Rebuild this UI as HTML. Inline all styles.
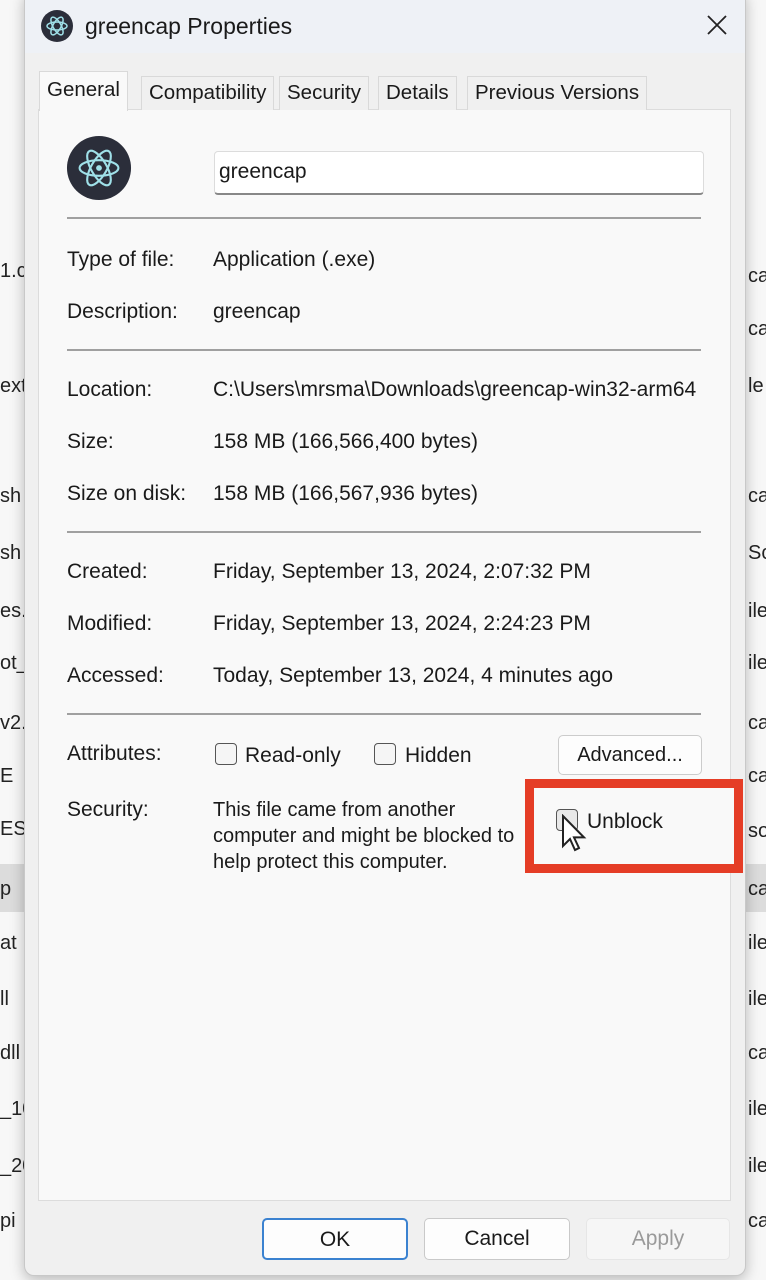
<!DOCTYPE html>
<html><head><style>
*{box-sizing:border-box;margin:0;padding:0}
body{width:766px;height:1280px;background:#f7f7f7;position:relative;overflow:hidden;font-family:"Liberation Sans",sans-serif;color:#1a1a1a;font-size:21px}
.a{position:absolute;white-space:nowrap}
.bg{color:#222;font-size:20px}
.hl{position:absolute;left:0;width:766px;top:864px;height:48px;background:#dcdcdc}
.dlg{position:absolute;left:24px;top:-10px;width:722px;height:1286px;background:#f0f0f0;border:1px solid #c8c8c8;border-radius:10px;box-shadow:0 4px 14px rgba(0,0,0,.25);overflow:hidden}
.title{position:absolute;left:0;top:0;width:100%;height:62px;background:#eef1f6}
.panel{position:absolute;left:13px;top:118px;width:693px;height:1092px;background:#f9f9f9;border:1px solid #dcdcdc}
.tab{position:absolute;top:85px;height:34px;background:#f0f0f0;border:1px solid #d9d9d9;border-bottom:none;padding:4px 7px;font-size:20.5px}
.sep{position:absolute;left:42px;width:634px;height:2px;background:#a0a0a0}
.cb{position:absolute;width:22px;height:22px;border:1.5px solid #555;border-radius:4px;background:#f5f5f5}
.btn{position:absolute;top:1218px;height:42px;border:1px solid #c9c9c9;border-radius:5px;background:#fdfdfd;text-align:center;line-height:40px;font-size:21px}
</style></head><body>
<div class="hl"></div>
<div class="a bg" style="left:0;top:260px">1.c</div>
<div class="a bg" style="left:0;top:375px">ext</div>
<div class="a bg" style="left:0;top:485px">sh</div>
<div class="a bg" style="left:0;top:542px">sh</div>
<div class="a bg" style="left:0;top:600px">es.</div>
<div class="a bg" style="left:0;top:652px">ot_</div>
<div class="a bg" style="left:0;top:712px">v2.</div>
<div class="a bg" style="left:0;top:765px">E</div>
<div class="a bg" style="left:0;top:818px">ES.</div>
<div class="a bg" style="left:0;top:878px">p</div>
<div class="a bg" style="left:0;top:932px">at</div>
<div class="a bg" style="left:0;top:988px">ll</div>
<div class="a bg" style="left:0;top:1042px">dll</div>
<div class="a bg" style="left:0;top:1098px">_10</div>
<div class="a bg" style="left:0;top:1155px">_20</div>
<div class="a bg" style="left:0;top:1210px">pi</div>
<div class="a bg" style="left:748px;top:265px">ca</div>
<div class="a bg" style="left:748px;top:318px">ca</div>
<div class="a bg" style="left:748px;top:375px">le</div>
<div class="a bg" style="left:748px;top:485px">ca</div>
<div class="a bg" style="left:748px;top:542px">Sc</div>
<div class="a bg" style="left:748px;top:600px">ile</div>
<div class="a bg" style="left:748px;top:652px">ile</div>
<div class="a bg" style="left:748px;top:712px">ca</div>
<div class="a bg" style="left:748px;top:765px">ca</div>
<div class="a bg" style="left:748px;top:820px">so</div>
<div class="a bg" style="left:748px;top:878px">ca</div>
<div class="a bg" style="left:748px;top:932px">ile</div>
<div class="a bg" style="left:748px;top:988px">ile</div>
<div class="a bg" style="left:748px;top:1042px">ca</div>
<div class="a bg" style="left:748px;top:1098px">ile</div>
<div class="a bg" style="left:748px;top:1155px">ile</div>
<div class="a bg" style="left:748px;top:1210px">ca</div>

<div class="dlg">
<div class="title"></div>
<svg class="a" style="left:15px;top:18px" width="34" height="34" viewBox="0 0 34 34"><circle cx="17" cy="17" r="16" fill="#2b2e3a"/><g fill="none" stroke="#9fe0e8" stroke-width="1.5"><ellipse cx="17" cy="17" rx="10" ry="4"/><ellipse cx="17" cy="17" rx="10" ry="4" transform="rotate(60 17 17)"/><ellipse cx="17" cy="17" rx="10" ry="4" transform="rotate(-60 17 17)"/></g></svg>
<div class="a" style="left:60px;top:22px;font-size:23px">greencap Properties</div>
<svg class="a" style="left:682px;top:24px" width="20" height="20" viewBox="0 0 20 20"><path d="M1 1L19 19M19 1L1 19" stroke="#222" stroke-width="1.8"/></svg>
<div class="panel"></div>
<div class="tab" style="left:14px;top:80px;height:40px;background:#f9f9f9;padding-top:6px">General</div>
<div class="tab" style="left:116px">Compatibility</div>
<div class="tab" style="left:254px">Security</div>
<div class="tab" style="left:353px">Details</div>
<div class="tab" style="left:442px">Previous Versions</div>
<svg class="a" style="left:41px;top:144px" width="66" height="66" viewBox="0 0 34 34"><circle cx="17" cy="17" r="16.5" fill="#2b2e3a"/><g fill="none" stroke="#9fe0e8" stroke-width="1.1"><ellipse cx="17" cy="17" rx="10" ry="4"/><ellipse cx="17" cy="17" rx="10" ry="4" transform="rotate(60 17 17)"/><ellipse cx="17" cy="17" rx="10" ry="4" transform="rotate(-60 17 17)"/></g><circle cx="17" cy="17" r="1.5" fill="#9fe0e8"/></svg>
<div class="a" style="left:189px;top:160px;width:490px;height:44px;background:#fff;border:1px solid #dcdcdc;border-bottom:2px solid #888;border-radius:4px;padding:8px 4px">greencap</div>
<div class="sep" style="top:226px"></div>
<div class="a" style="left:42px;top:257px">Type of file:</div><div class="a" style="left:188px;top:257px">Application (.exe)</div>
<div class="a" style="left:42px;top:309px">Description:</div><div class="a" style="left:188px;top:309px">greencap</div>
<div class="sep" style="top:358px"></div>
<div class="a" style="left:42px;top:387px">Location:</div><div class="a" style="left:188px;top:387px;width:493px;overflow:hidden">C:\Users\mrsma\Downloads\greencap-win32-arm64</div>
<div class="a" style="left:42px;top:439px">Size:</div><div class="a" style="left:188px;top:439px">158 MB (166,566,400 bytes)</div>
<div class="a" style="left:42px;top:491px">Size on disk:</div><div class="a" style="left:188px;top:491px">158 MB (166,567,936 bytes)</div>
<div class="sep" style="top:540px"></div>
<div class="a" style="left:42px;top:569px">Created:</div><div class="a" style="left:188px;top:569px">Friday, September 13, 2024, 2:07:32 PM</div>
<div class="a" style="left:42px;top:621px">Modified:</div><div class="a" style="left:188px;top:621px">Friday, September 13, 2024, 2:24:23 PM</div>
<div class="a" style="left:42px;top:673px">Accessed:</div><div class="a" style="left:188px;top:673px">Today, September 13, 2024, 4 minutes ago</div>
<div class="sep" style="top:722px"></div>
<div class="a" style="left:42px;top:751px">Attributes:</div>
<div class="cb" style="left:190px;top:752px"></div><div class="a" style="left:220px;top:753px">Read-only</div>
<div class="cb" style="left:349px;top:752px"></div><div class="a" style="left:380px;top:753px">Hidden</div>
<div class="a" style="left:533px;top:744px;width:144px;height:40px;border:1px solid #ccc;border-radius:5px;background:#fdfdfd;text-align:center;line-height:38px;font-size:20px">Advanced...</div>
<div class="a" style="left:42px;top:807px">Security:</div>
<div class="a" style="left:188px;top:806px;line-height:26px;font-size:20px">This file came from another<br>computer and might be blocked to<br>help protect this computer.</div>
<div class="a" style="left:500px;top:788px;width:218px;height:94px;border:9px solid #e53d26;background:#f9f9f9"></div>
<div class="cb" style="left:531px;top:818px;background:#e8e8e8"></div><div class="a" style="left:562px;top:819px">Unblock</div>
<svg class="a" style="left:536px;top:823px" width="26" height="38" viewBox="0 0 13 19"><path d="M1 1v15l3.5-3.5 2.5 5.5 2-1-2.5-5.3h5z" fill="#fff" stroke="#222" stroke-width="1"/></svg>
</div>
<div class="btn" style="left:262px;width:146px;border:2px solid #3b82d0">OK</div>
<div class="btn" style="left:424px;width:146px">Cancel</div>
<div class="btn" style="left:586px;width:144px;background:#f6f6f6;border-color:#e6e6e6;color:#9a9a9a">Apply</div>
</body></html>
